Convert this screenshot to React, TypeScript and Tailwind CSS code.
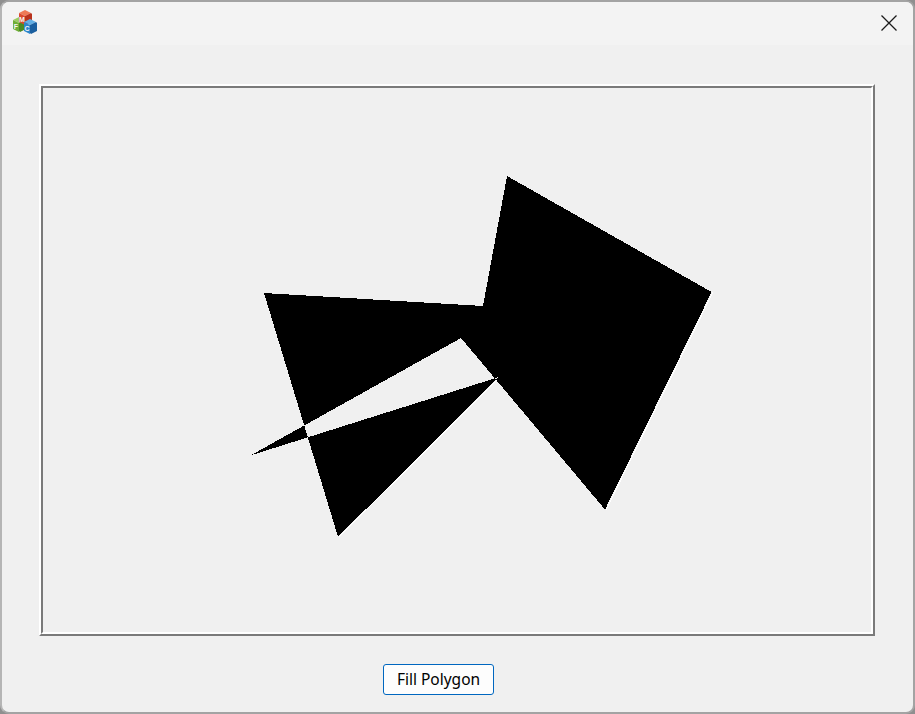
const POLYGON = "264,293 483,306 507,176 711.6,292 605,509.6 461,338 250.6,455.4 499,377 338,536.8";

const FONT = "Liberation Sans, sans-serif";

function Cube({ x, y, letter, left, right, top }: { x: number; y: number; letter: string; left: string; right: string; top: string }) {
  // x,y is the top corner of the cube
  return (
    <g transform={`translate(${x} ${y})`}>
      <polygon points="-6,3 0,0 6,3 0,6" fill={top} />
      <polygon points="0,6 6,3 7,4 7,12 1,15 0,14" fill={right} />
      <polygon points="-6,3 0,6 0,15 -6,12" fill={left} />
      <text x="-3" y="12" fontSize="7" fontWeight="700" fill="#f4f4f4" textAnchor="middle" fontFamily={FONT}>{letter}</text>
    </g>
  );
}

function MfcIcon() {
  return (
    <svg width="26" height="26" viewBox="0 0 26 26">
      <Cube x={7} y={7} letter="F" left="#6fae36" right="#4c8a22" top="#9ccc62" />
      <Cube x={13} y={0} letter="M" left="#dc4a2c" right="#b9321c" top="#ee7a55" />
      <Cube x={18} y={9} letter="C" left="#2c86cc" right="#1b5f9f" top="#62aee4" />
    </svg>
  );
}

export default function App() {
  return (
    <div className="h-[714px] w-[915px] overflow-hidden bg-[#8f8f8f]">
      <div className="flex h-full w-full flex-col overflow-hidden rounded-[9px] border-2 border-[#a3a3a3] border-l-[#b5b5b5] bg-[#f0f0f0]">
        {/* Title bar */}
        <div className="flex h-[43px] shrink-0 items-start justify-between bg-[#f3f3f3] pl-[10px] pr-[16px]">
          <div className="mt-[8px]">
            <MfcIcon />
          </div>
          <svg width="16" height="16" viewBox="0 0 16 16" className="mt-[13px] text-[#1a1a1a]">
            <path d="M0.5 0.5 L15.5 15.5 M15.5 0.5 L0.5 15.5" stroke="currentColor" strokeWidth="1.3" fill="none" />
          </svg>
        </div>

        {/* Group frame */}
        <div className="ml-[37px] mt-[39px] h-[552px] w-[836px] shrink-0 border-2 border-[#ffffff] border-b-[#7a7a7a] border-r-[#7a7a7a] bg-[#f0f0f0]">
          <div className="h-full w-full border-2 border-[#7a7a7a] border-b-white border-r-white bg-[#f0f0f0]">
            <svg width="828" height="544" viewBox="43 88 828 544" className="block" shapeRendering="crispEdges">
              <path d="M339 537 L500 377 M606 510 L713 292" stroke="#ffffff" strokeWidth="1" fill="none" />
              <polygon points={POLYGON} fill="#000" fillRule="evenodd" />
            </svg>
          </div>
        </div>

        {/* Button */}
        <div className="ml-[381px] mt-[28px]">
          <button className="flex h-[31px] w-[111px] items-center justify-center rounded-[3px] border border-[#0067c0] bg-[#fdfdfd] font-['Noto_Sans',sans-serif] text-[15.5px] text-black">
            Fill Polygon
          </button>
        </div>
      </div>
    </div>
  );
}
